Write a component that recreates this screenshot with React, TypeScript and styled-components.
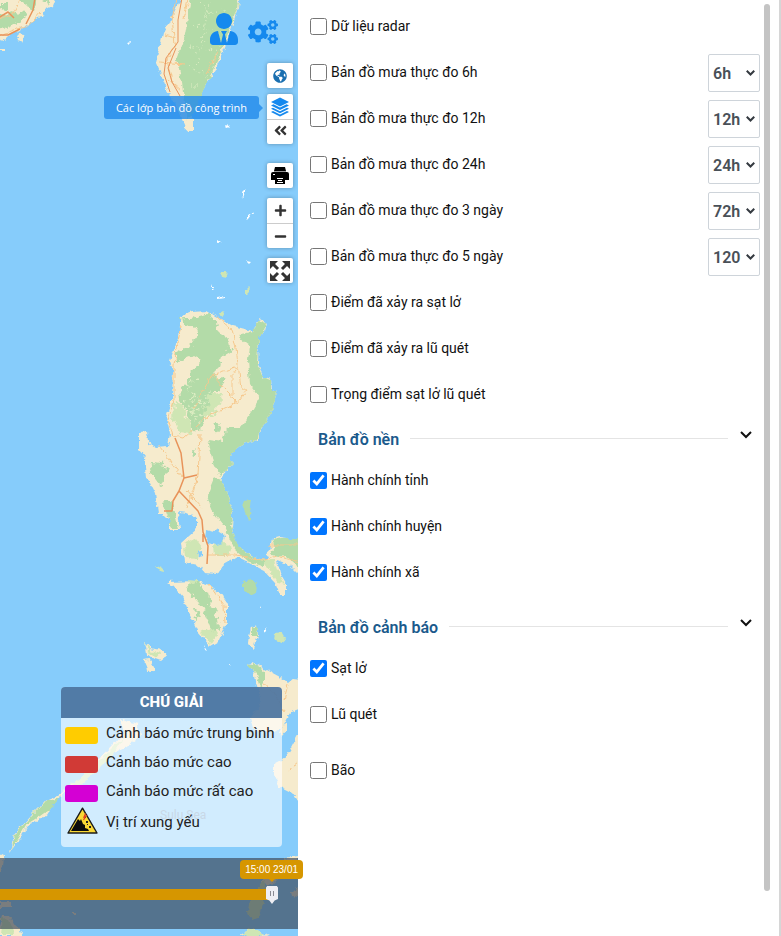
import React, { useState } from "react";
import styled, { createGlobalStyle } from "styled-components";
import { FaUserTie, FaCogs, FaGlobeAmericas, FaAngleDoubleLeft, FaPlus, FaMinus } from "react-icons/fa";

const GlobalStyle = createGlobalStyle`
  *, *::before, *::after { box-sizing: border-box; }
  body { margin: 0; background: #fff; font-family: Roboto, "Noto Sans", sans-serif; color: #111; }
  button, select, input { font-family: inherit; }
`;

const Page = styled.div`
  display: grid;
  grid-template-columns: minmax(0, 298fr) minmax(0, 483fr);
  min-height: 100vh;
`;

/* ---------- map ---------- */

const MapPane = styled.main`
  position: relative;
  background: #86ccfb;
`;

const MapCanvas = styled.svg`
  position: absolute;
  inset: 0;
  width: 100%;
  height: 100%;
`;

const AccountBar = styled.nav`
  position: absolute;
  top: 13px;
  right: 20px;
  display: flex;
  align-items: flex-start;
  gap: 8px;
`;

const AccountButton = styled.button<{ $drop?: number }>`
  display: flex;
  padding: ${(p) => p.$drop ?? 0}px 0 0;
  border: 0;
  background: none;
  color: #1589ee;
  cursor: pointer;
`;

const Controls = styled.div`
  position: absolute;
  top: 63px;
  right: 5px;
  display: flex;
  flex-direction: column;
`;

const ControlGroup = styled.div<{ $after?: number }>`
  display: flex;
  flex-direction: column;
  width: 26px;
  margin-bottom: ${(p) => p.$after ?? 10}px;
  border-radius: 2px;
  background: #fff;
  box-shadow: 0 0 4px rgba(0, 0, 0, 0.3);
`;

const ControlButton = styled.button<{ $color?: string; $lift?: boolean }>`
  display: flex;
  align-items: center;
  justify-content: center;
  height: 25px;
  padding: 0 0 ${(p) => (p.$lift ? 4 : 0)}px;
  border: 0;
  background: none;
  color: ${(p) => p.$color ?? "#333"};
  cursor: pointer;

  & + & {
    border-top: 1px solid #ccc;
  }
`;

const Tip = styled.div`
  position: absolute;
  top: 96px;
  right: 39px;
  padding: 0 12px;
  border-radius: 3px;
  background: rgba(33, 137, 235, 0.8);
  color: #fff;
  font: 11px/23px "Open Sans", "Noto Sans", sans-serif;
  white-space: nowrap;

  &::after {
    content: "";
    position: absolute;
    top: 8px;
    left: 100%;
    border: 4px solid transparent;
    border-right: 0;
    border-left-color: rgba(33, 137, 235, 0.8);
  }
`;

const Legend = styled.section`
  position: absolute;
  right: 16px;
  bottom: 89px;
  width: 221px;
  padding-bottom: 8px;
  border-radius: 4px;
  overflow: hidden;
  background: rgba(255, 255, 255, 0.62);
`;

const LegendTitle = styled.h2`
  margin: 0;
  background: rgba(52, 98, 146, 0.82);
  color: #fff;
  font-size: 15px;
  font-weight: 800;
  line-height: 31px;
  text-align: center;
`;

const LegendItem = styled.div<{ $tall?: boolean }>`
  display: flex;
  align-items: center;
  gap: 8px;
  height: ${(p) => (p.$tall ? 34 : 29)}px;
  padding-left: 4px;
  color: #222;
  font-size: 15px;
`;

const Swatch = styled.span<{ $color: string }>`
  width: 33px;
  height: 17px;
  margin-top: 5px;
  border-radius: 3px;
  background: ${(p) => p.$color};
`;

const HazardSlot = styled.span`
  display: flex;
  justify-content: flex-end;
  width: 33px;
  padding-bottom: 3px;
`;

const Timeline = styled.div`
  position: absolute;
  left: 0;
  right: 0;
  bottom: 7px;
  height: 71px;
  padding: 27px 20px 0 0;
  background: rgba(57, 69, 85, 0.66);
`;

const TimeRange = styled.input`
  display: block;
  appearance: none;
  width: 100%;
  height: 20px;
  margin: 0;
  background: linear-gradient(#d69600, #d69600) 0 4px / calc(100% - 6px) 11px no-repeat;

  &::-webkit-slider-thumb {
    appearance: none;
    width: 12px;
    height: 18px;
    background:
      linear-gradient(#8a8a92, #8a8a92) 4px 5px / 1px 5px no-repeat,
      linear-gradient(#8a8a92, #8a8a92) 7px 5px / 1px 5px no-repeat,
      #eeeef3;
    clip-path: polygon(10% 0, 90% 0, 100% 8%, 100% 72%, 72% 80%, 50% 100%, 28% 80%, 0 72%, 0 8%);
  }
`;

const TimeBubble = styled.output`
  position: absolute;
  z-index: 2;
  top: 2px;
  right: -5px;
  padding: 0 5px;
  border-radius: 4px;
  background: #d69600;
  color: #fff;
  font: 10px/19px "Liberation Sans", Arial, sans-serif;
  white-space: nowrap;

  &::after {
    content: "";
    position: absolute;
    top: 100%;
    left: 50%;
    margin-left: -3px;
    border: 3px solid transparent;
    border-bottom: 0;
    border-top-color: #d69600;
  }
`;

/* ---------- layer panel ---------- */

const Panel = styled.aside`
  display: flex;
  border-right: 2px solid #d6d6d6;
  background: #fff;
`;

const PanelBody = styled.div`
  flex: 1;
  min-width: 0;
  padding: 4px 4px 0 12px;
`;

const ScrollThumb = styled.div`
  width: 6px;
  margin: 4px 9px 45px 0;
  border-radius: 3px;
  background: #c4c4c4;
`;

const LayerGroup = styled.section<{ $gap?: boolean }>`
  margin-bottom: ${(p) => (p.$gap ? 10 : 0)}px;
`;

const LayerRow = styled.div`
  display: flex;
  align-items: flex-start;
  justify-content: space-between;
  height: 46px;
`;

const LayerLabel = styled.label`
  display: flex;
  align-items: center;
  gap: 4px;
  padding-top: 14px;
  font-size: 14px;
  line-height: 17px;
  cursor: pointer;
`;

const Tick = styled.input`
  width: 17px;
  height: 17px;
  margin: 0;
  accent-color: #0075ff;
`;

const PeriodBox = styled.div`
  display: grid;
  align-items: center;
  width: 52px;
  height: 38px;
  margin-top: 4px;
  color: #495057;

  & > * {
    grid-area: 1 / 1;
  }

  & > svg {
    justify-self: end;
    margin-right: 5px;
    color: #343a40;
    pointer-events: none;
  }
`;

const Period = styled.select`
  appearance: none;
  width: 100%;
  height: 100%;
  padding: 0 0 0 4px;
  border: 1px solid #ced4da;
  border-radius: 2px;
  background: #fff;
  color: inherit;
  font-size: 16px;
  font-weight: 600;
`;

const SectionHead = styled.div`
  display: flex;
  align-items: center;
  height: 40px;
  padding: 0 8px;
`;

const SectionTitle = styled.h3`
  margin: 3px 11px 0 0;
  color: #1b5a8c;
  font-size: 16px;
  font-weight: 600;
  line-height: 20px;
`;

const Rule = styled.hr`
  flex: 1;
  height: 1px;
  margin: 0 12px 0 0;
  border: 0;
  background: #e4e4e4;
`;

const Collapse = styled.button`
  display: flex;
  padding: 0 0 6px;
  border: 0;
  background: none;
  color: #111;
  cursor: pointer;
`;

/* ---------- drawings ---------- */

const SEA = "#86ccfb";
const LAND = "#f6ebcd";
const WOOD = "#b3dba8";
const MEADOW = "#cfe6b4";
const ROAD = "#f6c88d";
const MAIN = "#e8935a";

const BaseMap = () => (
  <MapCanvas viewBox="0 0 298 936" preserveAspectRatio="xMinYMin slice" aria-hidden="true">
    <defs>
      <filter id="coast" x="-5%" y="-5%" width="110%" height="110%">
        <feTurbulence type="fractalNoise" baseFrequency="0.16" numOctaves="3" seed="4" />
        <feDisplacementMap in="SourceGraphic" scale="6" xChannelSelector="R" yChannelSelector="G" />
      </filter>
      <filter id="forest" x="-5%" y="-5%" width="110%" height="110%">
        <feTurbulence type="fractalNoise" baseFrequency="0.14" numOctaves="3" seed="9" />
        <feDisplacementMap in="SourceGraphic" scale="12" xChannelSelector="R" yChannelSelector="G" />
      </filter>
    </defs>
    <rect width="298" height="936" fill={SEA} />
    <g filter="url(#coast)">
      <g fill={LAND}>
        <path d="M-5-5H56L52 6 45 10 42 17 34 19 28 25 22 27 20 31 10 35 4 41-5 38Z" />
        <path d="M19 33l6 1-4 8-4-1ZM0 48h5v3H0Z" />
        <path d="M182-5 172 17 163 33 156 63 167 90 180 113 187 131 193 131 193 113 203 90 215 70 227 43 238 7 240-5Z" />
        <path d="M180 317 192 312 207 311 217 317 233 326 253 331 259 318 267 323 265 332 259 337 258 363 263 377 272 379 273 390 277 392 273 407 265 423 258 433 258 440 240 445 230 453 232 465 220 478 227 493 233 513 232 528 237 545 253 557 265 560 270 550 272 539 280 537 302 540V577L290 565 277 560 280 573 286 583 286 595 280 595 275 583 263 570 247 562 237 557 223 565 217 574 204 573 198 565 183 562 181 543 198 528 198 518 187 513 178 512 180 530 170 530 170 520 163 513 158 513 155 493 147 477 145 457 139 450 139 432 147 431 148 442 157 448 168 447 170 433 166 417 172 400 173 370 170 362 175 347 180 327Z" />
        <path d="M167 582 198 581 210 585 220 593 227 603 227 623 220 640 210 646 198 632 188 610 183 597 175 587Z" />
        <path d="M251 627l5-2 1 10-4 14-5-5 1-8ZM145 643l6 5 13 3 3 5-6 5-9-3-5-4ZM146 661l4 1 4 9-6 1Z" />
        <path d="M247 664 253 663 267 670 280 677 287 683 293 678 302 679V708L292 712 287 718 282 727 273 733 253 729 250 718 260 706 257 686 254 671Z" />
        <path d="M282 726l5-3 0 8-5 6-3-4ZM273 765 283 760 290 750 302 728V806L292 793 280 787 273 773Z" />
        <path d="M10 852 14 834 32 814 44 802 58 796 78 780 98 760 112 745 124 731 121 718 130 722 138 724 140 736 124 748 106 756 92 772 74 786 56 800 46 816 30 824 22 836Z" />
        <path d="M145 652l4 8M144 660l5-1 6 11-5 2Z" />
      </g>
      <g fill={MEADOW}>
        <path d="M262 560l12 0 3 10 8 14-8-2-8-12ZM184 544l12-5 6 8-5 12-12-1ZM213 545l10-4 9 7-4 8-14 0ZM145 643l6 7 10 3-4 5-7-4ZM200 632l12-6 6 8-7 10ZM275 634l8-1 3 5-4 5-8-3ZM220 313l4-3 1 5-3 2Z" />
        <path d="M72 784l24-20 18-18 10-8-10 16-16 16-18 16ZM155 565l7 2 1 4-4-1ZM246 290l4-4-1 6-3 3ZM220 272l7 0-1 5-5-1ZM188 580l10 1 3 5-11 0Z" />
      </g>
      <g fill={WOOD}>
        <path d="M191-5 188 18 184 40 177 60 182 82 184 104 187 119 193 117 202 93 213 70 225 43 237 8 239-5Z" />
        <path d="M241 334 252 332 259 320 266 323 264 332 259 338 257 363 263 378 272 380 272 390 277 392 273 407 265 423 258 432 257 440 240 445 230 453 232 465 220 476 213 463 210 448 208 440 222 442 226 428 240 428 252 412 260 398 250 384 248 360 250 346 240 338Z" />
        <path d="M214 478 221 480 227 493 233 514 231 526 238 546 251 556 264 561 264 567 247 561 235 550 224 525 210 508 207 495Z" />
        <path d="M272 540l9-2h20v30l-14-11-16-2 4-8ZM163 503l8-3 4 12 3 17-6-1-4-12Z" />
        <path d="M243 581l9-2 5 6-1 7-6 3-7-5ZM244 501l8-1-2 12 1 8-3 1-2-10-4-5ZM252 627h5l-1 9h-4Z" />
        <path d="M11 850 15 834 32 815 45 802 59 798 54 806 40 816 27 824 20 836ZM247 664l7 0 10 6 0 14-3 4-4-14Z" />
      </g>
      <g fill={SEA}>
        <path d="M206 530l8 2 3-5 3 5 5 3-2 8-8 2-8-2-2-6ZM198 552l5-1 0 5-4 1Z" />
      </g>
      <path fill="#fff" d="M242 193l4-4-3 9ZM248 216l5-4-5 7ZM218 240l3 2-3 1ZM246 261l5 1-2 2ZM212 284l2 6-2 0ZM217 297l8-1 0 2-8 1ZM127 42l5-1-3 3ZM226 124l4 3-3 1ZM264 627l2 5-2-1ZM259 606l2 1-2 1ZM204 646l3 5-2-1ZM228 663l2 4-2-2Z" />
    </g>
    <g filter="url(#forest)">
      <g fill={MEADOW}>
        <path d="M174 404l8 2 6 12 4 16-14-1-5-12ZM204 398l14-6 6 4-8 16-12 8Z" />
      </g>
      <g fill={WOOD}>
        <path d="M182 318 192 318 207 314 217 321 218 328 224 334 229 342 231 350 222 355 220 368 214 374 222 378 224 386 214 391 208 400 204 414 200 430 191 429 188 414 180 402 179 386 189 384 189 373 201 362 191 356 177 362 177 353 191 344 197 335 194 327 183 324Z" />
        <path d="M-2 15 6 17 12 10 22 12 26 18 20 23 12 26 2 29-2 32ZM17-2 38-2 34 9 24 5ZM0 2l8 0 0 6-8 2ZM44 0l6 0-3 6Z" />
        <path d="M153 462 164 464 167 474 162 486 154 480 150 469ZM214 424l6-2 2 6-6 4ZM192 450l4 4-3 4ZM194 610l6 2 2 8-7-2Z" />
        <path d="M188 583 199 584 209 594 211 606 219 618 220 630 213 633 208 620 200 604 189 592Z" />
      </g>
    </g>
    <g fill="none" stroke={ROAD} strokeWidth="1" filter="url(#coast)">
      <path d="M181 325 174 365 174 400 168 420 173 436 184 438 208 416 232 406 236 400 226 390 212 375 234 368 238 368M217 317 232 330 236 348 241 388 247 390 240 400 228 408M238 366l-6 8 0 24M160 447l18 24 5 6M200 434l-2 42-12 32M198 474l-4 20-7 8M186 490l16 18M208 555l28 0 28 5 12-4 24 6M268 545h30M210 585l14 20 1 18M212 375l-10 18-8 16" />
      <path d="M176-2l-4 22 3 24-8 16 5 22M160 62l24 2M164 35l12 3M168 80l12 10M188 0l-4 18M218 50l-8 18-4 6" />
      <path d="M-4 20 14 12 22-3M-2 36 14 30 28 26 40 12M264 684l10 8 10 20M284 700l4-16M288 770l10-8" />
    </g>
    <g fill="none" stroke={MAIN} strokeWidth="1.500" strokeLinejoin="round">
      <path d="M175 438 181 453 184 478 179 491 198 511 202 520 203 532 208 546 207 564M184 478l13-3M179 491l-6 10-1 10-8 0M203 534l0 8" />
      <path d="M182-2 178 20 178 42 166 58 164 74 170 92M176 48l-8 20 4 14 8 14" strokeWidth="1" />
      <path d="M-2 18 8 12 14 18M-2 35 8 35 20 29M35-2l-2 12-7 14" />
    </g>
    <g fill="none" stroke="#dcedc2" strokeWidth="1" strokeDasharray="2 3" filter="url(#forest)">
      <path d="M200 4l12 10 14-6M194 24l14 6 12 4M190 46l12 4 12 2M188 66l12 6 8 4M222 40l-8 20-10 20M210 0l-6 30M204 34l-8 32M230 20l-14 24M190 86l10 0" />
      <path d="M188 390l16 14M184 400l14 22M210 392l-12 24M198 378l-12 10M186 408l14 4M192 396l10 22" strokeWidth="2" />
    </g>
    <g fill={LAND} filter="url(#coast)">
      <path d="M-4 852l8 4-1 12-7 6ZM0 902h11v5H0ZM2 916l8 0 7 10 5 10H-4ZM20 930l4 2-3 4ZM72 913h4v2h-4ZM260 882l12-10 8 4-10 10ZM284 858l14-2v4l-14 1ZM292 892l8-8v14l-7-2ZM240 934l12-6 16 8Z" />
      <path fill={MEADOW} d="M249 904l4-8 6-2 0-10 6-4 2 10-4 14-5 14-6 2-4-8ZM2 918l7 2 6 14H0ZM242 933l10-5 12 6-10 6Z" />
    </g>
    <text x="160" y="819" fill="#6f97bd" fontFamily="Roboto, sans-serif" fontSize="12">Sulu Sea</text>
  </MapCanvas>
);

const LayersIcon = () => (
  <svg width="20" height="20" viewBox="0 0 20 20" fill="#1589ee" aria-hidden="true">
    <path d="M10 0.500 19 5 10 9.500 1 5Z" />
    <path d="M1 8.400 3.500 7.200 10 10.400 16.500 7.200 19 8.400 10 12.900Z" />
    <path d="M1 11.700 3 10.700 10 14.200 17 10.700 19 11.700 10 16.200Z" />
    <path d="M1 15 3 14 10 17.500 17 14 19 15 10 19.500Z" />
  </svg>
);

const PrintIcon = () => (
  <svg width="20" height="20" viewBox="0 0 20 20" aria-hidden="true">
    <path fill="#000" d="M5 1h10l1 4H4ZM3 6h14q2 0 2 2v6h-4v-3H5v3H1V8q0-2 2-2ZM5 11h10v7H5Z" />
    <path fill="#999" d="M4 5h12v1H4Z" />
    <path fill="#fff" d="M3 8h2v1H3ZM7 12h6v1H7ZM8 14h4v1H8ZM7 16h6v1H7Z" />
  </svg>
);

const ExpandIcon = () => (
  <svg width="20" height="20" viewBox="0 0 20 20" aria-hidden="true">
    <path d="M3 3 8 8M17 3 12 8M3 17 8 12M17 17 12 12" stroke="#333" strokeWidth="3" />
    <path fill="#333" d="M0 0H8L5.500 2.500 2.500 5.500 0 8ZM20 0H12L14.500 2.500 17.500 5.500 20 8ZM0 20H8L5.500 17.500 2.500 14.500 0 12ZM20 20H12L14.500 17.500 17.500 14.500 20 12Z" />
  </svg>
);

const HazardIcon = () => (
  <svg width="31" height="27" viewBox="0 0 31 27" aria-hidden="true">
    <path d="M15.500 1.200 30 26H1Z" fill="#f9d835" stroke="#1b1b1b" strokeWidth="1.400" strokeLinejoin="round" />
    <path d="M4 24 11 12 13 14 14 12 16 17 18 18 18 21 21 22 22 24Z" fill="#0c0c0c" />
    <path d="M19 14h2v2h-2ZM22 19h2v2h-2ZM18 10h1v1h-1ZM20 17h1v1h-1Z" fill="#222" />
    <path d="M18.500 6.500 17 10 19 9 16.500 13" fill="none" stroke="#e2401f" strokeWidth="1.200" />
  </svg>
);

const Chevron = ({ width = 12 }: { width?: number }) => (
  <svg
    width={width}
    height={(width * 2) / 3}
    viewBox="0 0 12 8"
    fill="none"
    stroke="currentColor"
    strokeWidth={24 / width}
    aria-hidden="true"
  >
    <path d="M1 1 6 6 11 1" />
  </svg>
);

/* ---------- data ---------- */

type Layer = { id: string; name: string; on?: boolean; period?: string };
type Group = { id: string; title?: string; gap?: boolean; layers: Layer[] };

const groups: Group[] = [
  {
    id: "observed",
    layers: [
      { id: "radar", name: "Dữ liệu radar" },
      { id: "rain6", name: "Bản đồ mưa thực đo 6h", period: "6h" },
      { id: "rain12", name: "Bản đồ mưa thực đo 12h", period: "12h" },
      { id: "rain24", name: "Bản đồ mưa thực đo 24h", period: "24h" },
      { id: "rain72", name: "Bản đồ mưa thực đo 3 ngày", period: "72h" },
      { id: "rain120", name: "Bản đồ mưa thực đo 5 ngày", period: "120" },
      { id: "slides", name: "Điểm đã xảy ra sạt lở" },
      { id: "floods", name: "Điểm đã xảy ra lũ quét" },
      { id: "hotspots", name: "Trọng điểm sạt lở lũ quét" },
    ],
  },
  {
    id: "base",
    title: "Bản đồ nền",
    gap: true,
    layers: [
      { id: "province", name: "Hành chính tỉnh", on: true },
      { id: "district", name: "Hành chính huyện", on: true },
      { id: "commune", name: "Hành chính xã", on: true },
    ],
  },
  {
    id: "warning",
    title: "Bản đồ cảnh báo",
    gap: true,
    layers: [
      { id: "slideWarning", name: "Sạt lở", on: true },
      { id: "floodWarning", name: "Lũ quét" },
    ],
  },
  { id: "storm", layers: [{ id: "stormLayer", name: "Bão" }] },
];

const levels = [
  { name: "Cảnh báo mức trung bình", color: "#ffcc00" },
  { name: "Cảnh báo mức cao", color: "#d13a36" },
  { name: "Cảnh báo mức rất cao", color: "#d400d4" },
];

const LayerItem = ({ layer }: { layer: Layer }) => (
  <LayerRow>
    <LayerLabel htmlFor={layer.id}>
      <Tick id={layer.id} type="checkbox" defaultChecked={layer.on} />
      {layer.name}
    </LayerLabel>
    {layer.period && (
      <PeriodBox>
        <Period aria-label={layer.name} defaultValue={layer.period}>
          <option>{layer.period}</option>
        </Period>
        <Chevron width={9} />
      </PeriodBox>
    )}
  </LayerRow>
);

const LayerSection = ({ group }: { group: Group }) => {
  const [open, setOpen] = useState(true);
  return (
    <LayerGroup $gap={group.gap}>
      {group.title && (
        <SectionHead>
          <SectionTitle>{group.title}</SectionTitle>
          <Rule />
          <Collapse aria-label={group.title} aria-expanded={open} onClick={() => setOpen(!open)}>
            <Chevron />
          </Collapse>
        </SectionHead>
      )}
      {open && group.layers.map((layer) => <LayerItem key={layer.id} layer={layer} />)}
    </LayerGroup>
  );
};

export default function App() {
  return (
    <>
      <GlobalStyle />
      <Page>
        <MapPane>
          <BaseMap />
          <AccountBar>
            <AccountButton aria-label="Tài khoản">
              <FaUserTie size={32} />
            </AccountButton>
            <AccountButton aria-label="Cài đặt" $drop={4}>
              <FaCogs size={30} />
            </AccountButton>
          </AccountBar>
          <Tip role="tooltip">Các lớp bản đồ công trình</Tip>
          <Controls>
            <ControlGroup $after={6}>
              <ControlButton aria-label="Bản đồ nền" $color="#1a6fb0">
                <FaGlobeAmericas size={14} />
              </ControlButton>
            </ControlGroup>
            <ControlGroup $after={19}>
              <ControlButton aria-label="Các lớp bản đồ công trình">
                <LayersIcon />
              </ControlButton>
              <ControlButton aria-label="Thu gọn" $lift>
                <FaAngleDoubleLeft size={15} />
              </ControlButton>
            </ControlGroup>
            <ControlGroup>
              <ControlButton aria-label="In">
                <PrintIcon />
              </ControlButton>
            </ControlGroup>
            <ControlGroup>
              <ControlButton aria-label="Phóng to">
                <FaPlus size={13} />
              </ControlButton>
              <ControlButton aria-label="Thu nhỏ">
                <FaMinus size={13} />
              </ControlButton>
            </ControlGroup>
            <ControlGroup>
              <ControlButton aria-label="Toàn màn hình">
                <ExpandIcon />
              </ControlButton>
            </ControlGroup>
          </Controls>
          <Legend>
            <LegendTitle>CHÚ GIẢI</LegendTitle>
            {levels.map((level) => (
              <LegendItem key={level.name}>
                <Swatch $color={level.color} />
                {level.name}
              </LegendItem>
            ))}
            <LegendItem $tall>
              <HazardSlot>
                <HazardIcon />
              </HazardSlot>
              Vị trí xung yếu
            </LegendItem>
          </Legend>
          <Timeline>
            <TimeRange type="range" aria-label="Thời gian" min={0} max={24} defaultValue={24} />
            <TimeBubble>15:00 23/01</TimeBubble>
          </Timeline>
        </MapPane>
        <Panel>
          <PanelBody>
            {groups.map((group) => (
              <LayerSection key={group.id} group={group} />
            ))}
          </PanelBody>
          <ScrollThumb />
        </Panel>
      </Page>
    </>
  );
}
